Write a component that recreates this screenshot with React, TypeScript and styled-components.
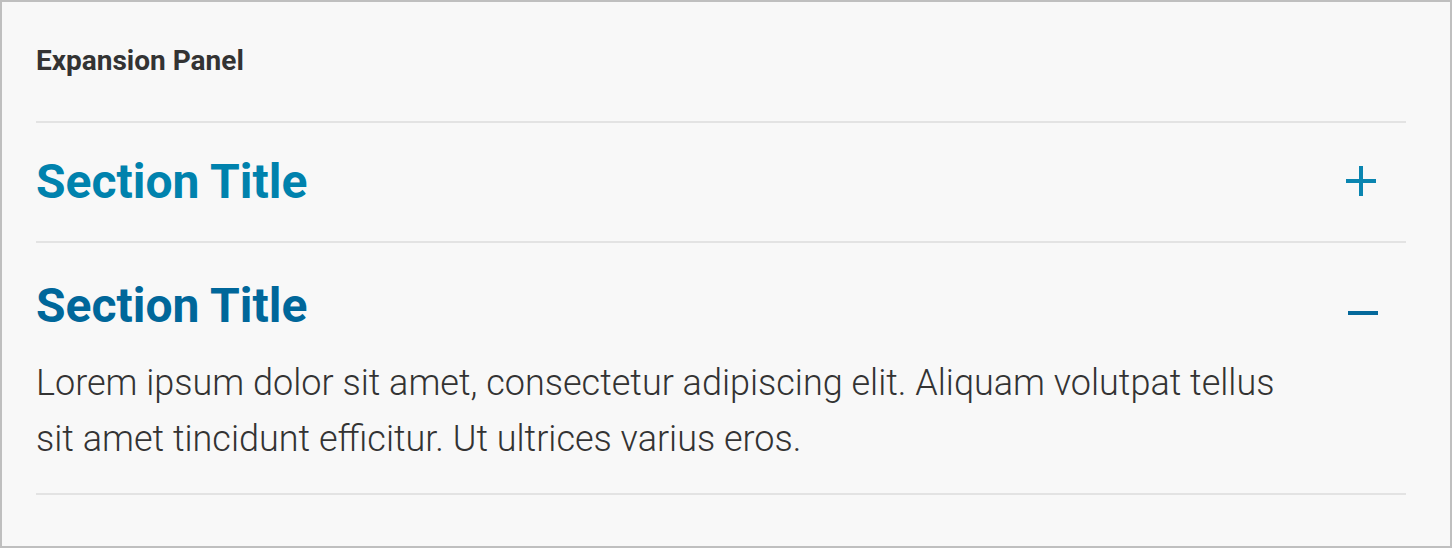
import React from "react";
import styled, { createGlobalStyle } from "styled-components";

const GlobalStyle = createGlobalStyle`
  html, body {
    margin: 0;
    background: #f8f8f8;
  }
  body {
    font-family: Roboto, "Noto Sans", "Liberation Sans", Arial, sans-serif;
  }
`;

const Panel = styled.div`
  box-sizing: border-box;
  width: 1452px;
  height: 548px;
  border: 2px solid #bfbfbf;
  background: #f8f8f8;
  padding: 0 44px 0 34px;
`;

const Heading = styled.h2`
  margin: 0;
  padding: 43px 0 44px;
  font-size: 28px;
  line-height: 32px;
  font-weight: 700;
  color: #333333;
`;

const List = styled.div`
  border-top: 2px solid #e3e3e3;
`;

const Section = styled.section`
  border-bottom: 2px solid #e3e3e3;
`;

const SectionHeader = styled.div<{ $expanded: boolean }>`
  display: flex;
  align-items: center;
  justify-content: space-between;
  padding: ${(p) => (p.$expanded ? "35px 0 0" : "31px 0 31px")};
  cursor: pointer;
`;

const Title = styled.h3<{ $expanded: boolean }>`
  margin: 0;
  font-size: 48px;
  line-height: 56px;
  font-weight: 700;
  color: ${(p) => (p.$expanded ? "#00679a" : "#0082ad")};
`;

const Toggle = styled.button<{ $expanded: boolean }>`
  display: flex;
  width: 30px;
  height: 30px;
  padding: 0;
  border: 0;
  background: none;
  cursor: pointer;
  margin: ${(p) => (p.$expanded ? "13px 28px 0 0" : "0 30px 2px 0")};
  color: ${(p) => (p.$expanded ? "#05699b" : "#0a85b0")};
`;

const Body = styled.p`
  margin: 0;
  padding: 21px 100px 26px 0;
  font-size: 36px;
  line-height: 56px;
  font-weight: 300;
  color: #333333;
`;

function ToggleIcon({ expanded }: { expanded: boolean }) {
  return (
    <svg width="30" height="30" viewBox="0 0 30 30" fill="currentColor">
      <rect x="0" y="13" width="30" height="4" />
      {!expanded && <rect x="13" y="0" width="4" height="30" />}
    </svg>
  );
}

type Item = { title: string; body?: string; expanded: boolean };

const items: Item[] = [
  { title: "Section Title", expanded: false },
  {
    title: "Section Title",
    expanded: true,
    body:
      "Lorem ipsum dolor sit amet, consectetur adipiscing elit. Aliquam volutpat tellus sit amet tincidunt efficitur. Ut ultrices varius eros.",
  },
];

function ExpansionSection({ item }: { item: Item }) {
  return (
    <Section>
      <SectionHeader $expanded={item.expanded}>
        <Title $expanded={item.expanded}>{item.title}</Title>
        <Toggle $expanded={item.expanded} aria-label={item.expanded ? "Collapse" : "Expand"}>
          <ToggleIcon expanded={item.expanded} />
        </Toggle>
      </SectionHeader>
      {item.expanded && <Body>{item.body}</Body>}
    </Section>
  );
}

export default function App() {
  return (
    <>
      <GlobalStyle />
      <Panel>
        <Heading>Expansion Panel</Heading>
        <List>
          {items.map((item, i) => (
            <ExpansionSection key={i} item={item} />
          ))}
        </List>
      </Panel>
    </>
  );
}
